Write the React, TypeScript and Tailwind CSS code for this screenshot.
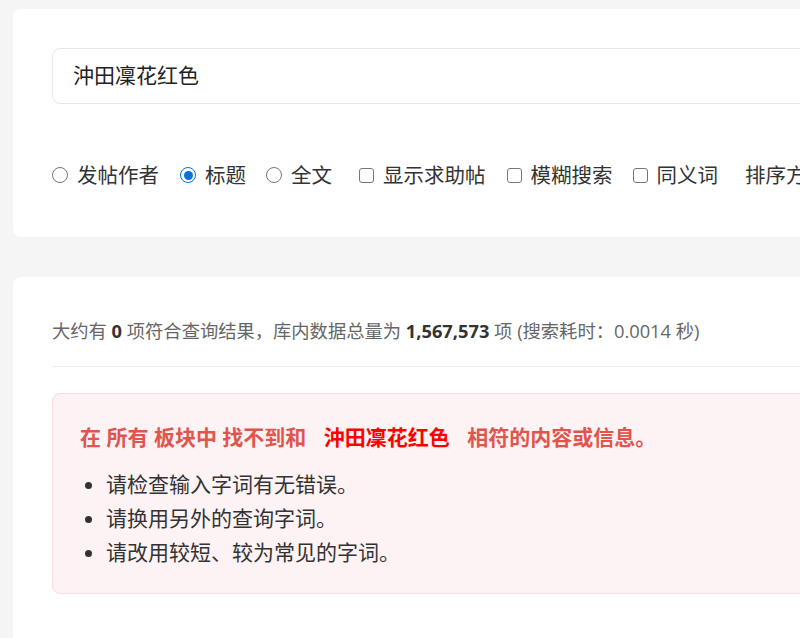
import React from "react";

const font = { fontFamily: '"Open Sans", "Noto Sans CJK SC", sans-serif' };

function Radio({ checked }: { checked?: boolean }) {
  if (checked) {
    return (
      <span className="flex h-[16px] w-[16px] items-center justify-center rounded-full border-[1.5px] border-[#0a6fd6] bg-white">
        <span className="h-[9px] w-[9px] rounded-full bg-[#0a6fd6]" />
      </span>
    );
  }
  return <span className="h-[16px] w-[16px] rounded-full border border-[#767676] bg-white" />;
}

function Check() {
  return <span className="h-[15px] w-[15px] rounded-[3px] border border-[#767676] bg-white" />;
}

function Opt({ children, control, className = "" }: { children: React.ReactNode; control: React.ReactNode; className?: string }) {
  return (
    <label className={`flex shrink-0 items-center gap-[9px] ${className}`}>
      {control}
      <span>{children}</span>
    </label>
  );
}

export default function App() {
  return (
    <div className="h-[638px] w-full overflow-hidden bg-[#f5f5f5] pl-[13px] pt-[9px]" style={font}>
      <div className="w-[1000px]">
        <div className="rounded-lg bg-white pl-[39px] pr-[39px] pt-[39px] pb-[48px]">
          <div className="flex h-[56px] items-center rounded-lg border border-[#e8e8e8] bg-white pl-[20px] text-[21px] text-[#222]">
            沖田凜花红色
          </div>
          <div className="mt-[57px] flex h-[28px] items-center whitespace-nowrap text-[20.5px] leading-[28px] text-[#333]">
            <Opt control={<Radio />}>发帖作者</Opt>
            <Opt control={<Radio checked />} className="ml-[21px]">标题</Opt>
            <Opt control={<Radio />} className="ml-[20px]">全文</Opt>
            <Opt control={<Check />} className="ml-[27px]">显示求助帖</Opt>
            <Opt control={<Check />} className="ml-[21px]">模糊搜索</Opt>
            <Opt control={<Check />} className="ml-[20px]">同义词</Opt>
            <span className="ml-[27px]">排序方式</span>
          </div>
        </div>

        <div className="mt-[40px] h-[400px] rounded-lg bg-white px-[39px] pt-[40px]">
          <div className="border-b border-[#ececec] pb-[21px] text-[18.3px] leading-[28px] text-[#666]">
            大约有 <b className="font-bold text-[#333]">0</b> 项符合查询结果，库内数据总量为{" "}
            <b className="font-bold text-[#333]">1,567,573</b> 项 (搜索耗时：0.0014 秒)
          </div>
          <div className="mt-[26px] rounded-lg border border-[#f8dde1] bg-[#fdf2f4] pl-[27px] pt-[29px] pb-[24px]">
            <div className="text-[21px] font-bold leading-[28px] text-[#e0554c]">
              在 所有 板块中 找不到和 <span className="px-[12px] text-[#ff0000]">沖田凜花红色</span> 相符的内容或信息。
            </div>
            <ul className="mt-[16px] list-disc pl-[26px] text-[21px] leading-[34px] text-[#333] marker:text-[#333]">
              <li>请检查输入字词有无错误。</li>
              <li>请换用另外的查询字词。</li>
              <li>请改用较短、较为常见的字词。</li>
            </ul>
          </div>
        </div>
      </div>
    </div>
  );
}
